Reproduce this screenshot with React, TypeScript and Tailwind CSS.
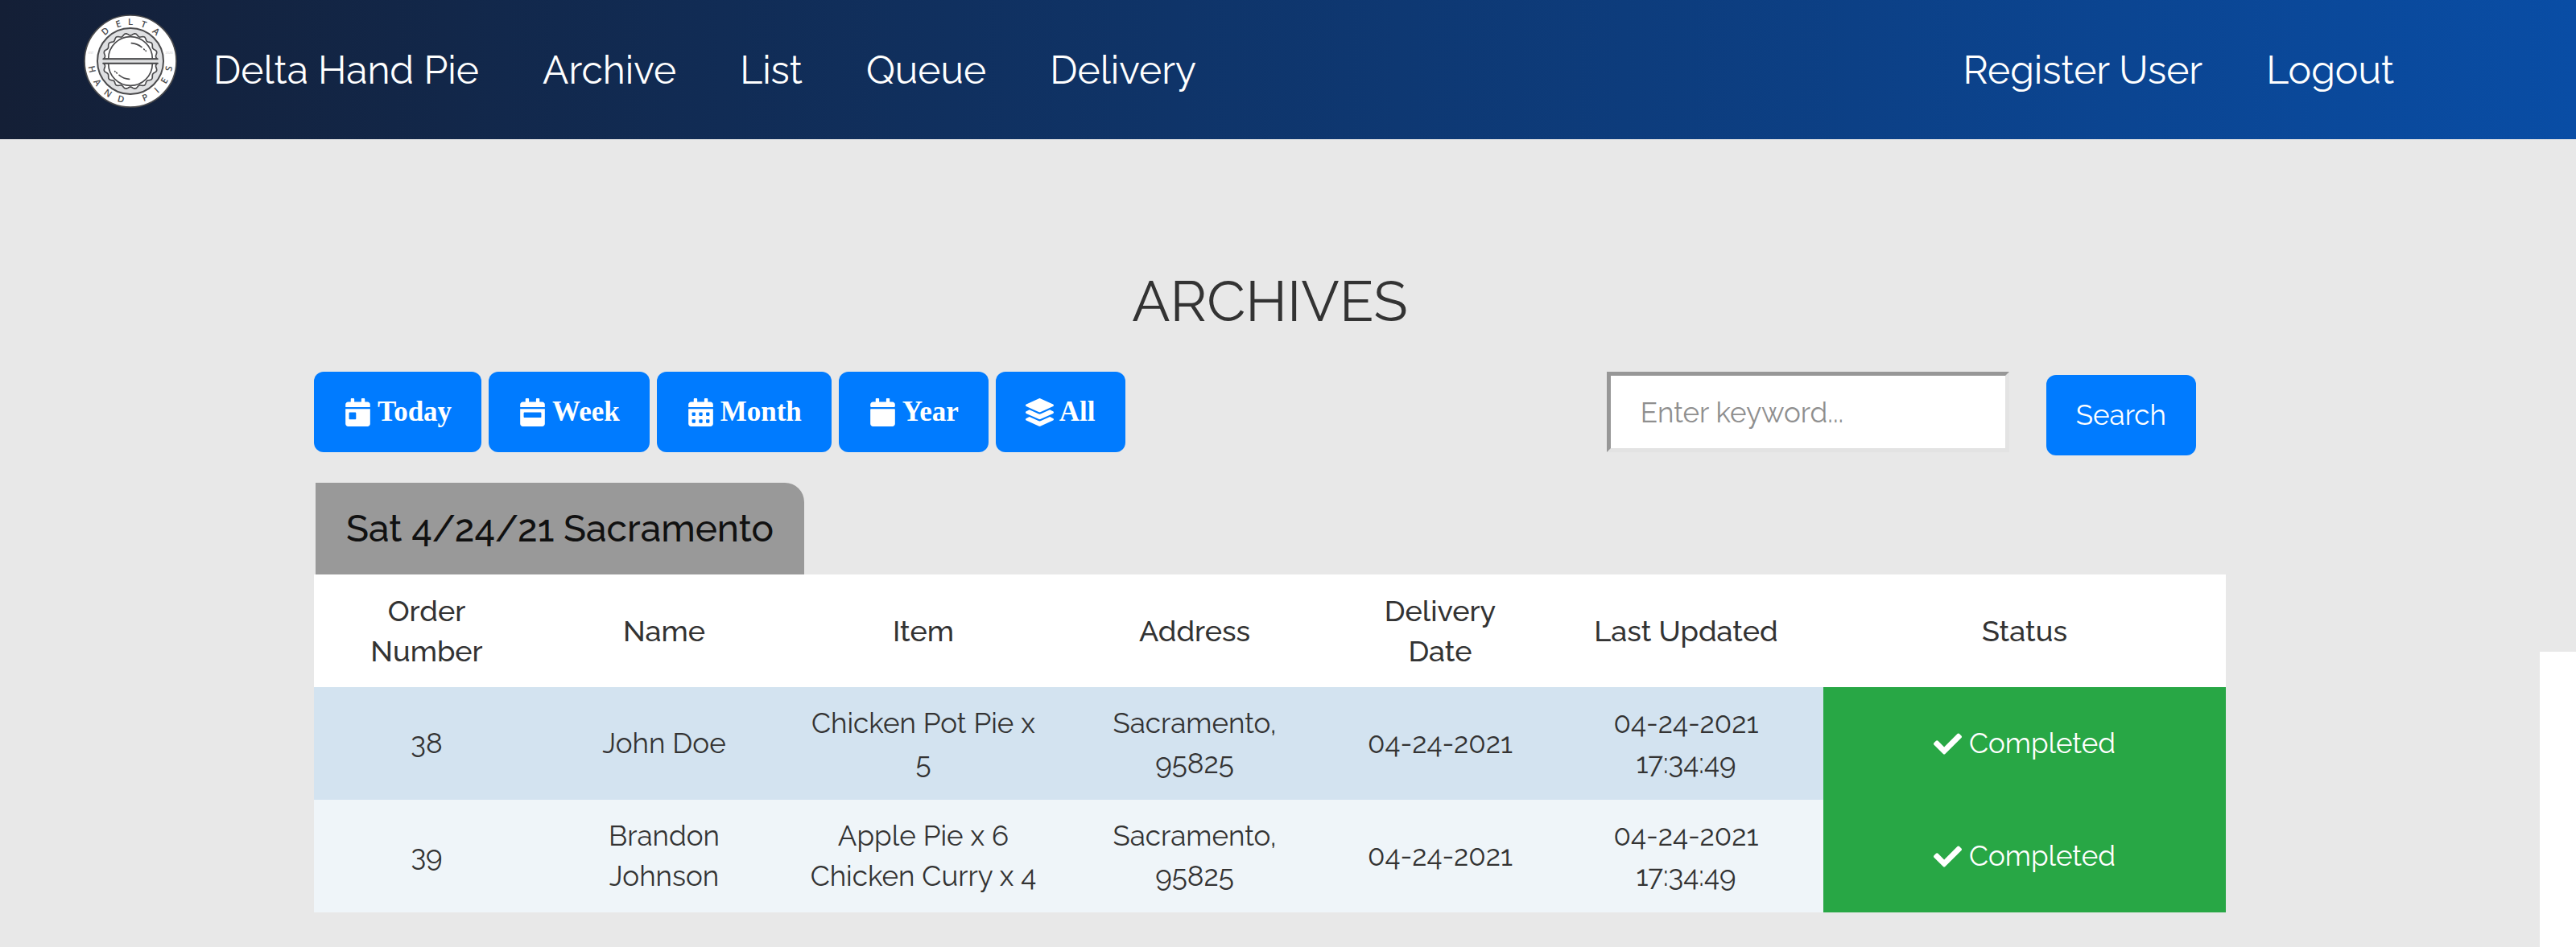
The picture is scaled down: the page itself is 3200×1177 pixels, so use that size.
import type { ReactNode } from 'react';
import { FaCalendar, FaCalendarAlt, FaCalendarDay, FaCalendarWeek, FaCheck, FaLayerGroup } from 'react-icons/fa';

const INK = '#4b4b4d';

/** Wavy crust edge of the upper half of the pie, closed along its cut side. */
function crustPath() {
  const points: string[] = [];
  for (let deg = 185; deg <= 355; deg += 2) {
    const a = (deg * Math.PI) / 180;
    const r = 100 - 4 * Math.cos((deg - 270) * (Math.PI / 180) * 18);
    points.push(`${(r * Math.cos(a)).toFixed(1)} ${(r * Math.sin(a)).toFixed(1)}`);
  }
  return `M${points.join('L')}Z`;
}

const topLetters: [string, number][] = [['D', -40], ['E', -18], ['L', 0], ['T', 20], ['A', 41]];
const bottomLetters: [string, number][] = [
  ['H', 78], ['A', 57], ['N', 35], ['D', 14], ['P', -22], ['I', -42], ['E', -60], ['S', -79],
];

function PieHalf() {
  return (
    <g fill="#fff" stroke={INK} strokeWidth="5" strokeLinejoin="round" strokeLinecap="round">
      <path d={crustPath()} />
      <path d="M-82 -9A82 82 0 0 1 82 -9" fill="none" />
      <path d="M4 -67A67 67 0 0 1 42 -52M50 -45L52 -43M57 -39L58 -38" fill="none" />
      <path d="M-102 -8H102" fill="none" />
    </g>
  );
}

function Logo() {
  return (
    <svg viewBox="-174 -174 348 348" className="size-[116px]" role="img" aria-label="Delta Hand Pies">
      <circle r="171" fill="#fff" stroke={INK} strokeWidth="5" />
      <circle r="123" fill="#dfe0e2" stroke={INK} strokeWidth="6" />
      <PieHalf />
      <g transform="rotate(180)">
        <PieHalf />
      </g>
      <g fill={INK} fontFamily="'Open Sans', sans-serif" fontWeight="600" fontSize="34" textAnchor="middle">
        {topLetters.map(([ch, deg]) => (
          <text key={`t${deg}`} transform={`rotate(${deg})`} y="-134">{ch}</text>
        ))}
        {bottomLetters.map(([ch, deg]) => (
          <text key={`b${deg}`} transform={`rotate(${deg})`} y="158">{ch}</text>
        ))}
      </g>
      <g fill="#c9c9cb" fontFamily="'Open Sans', sans-serif" fontSize="12" textAnchor="middle">
        <text x="-147" y="-26">EST</text>
        <text x="144" y="-26">2020</text>
      </g>
    </svg>
  );
}

function NavLink({ children }: { children: ReactNode }) {
  return <a href="#" className="whitespace-nowrap">{children}</a>;
}

const filters = [
  { label: 'Today', Icon: FaCalendarDay },
  { label: 'Week', Icon: FaCalendarWeek },
  { label: 'Month', Icon: FaCalendarAlt },
  { label: 'Year', Icon: FaCalendar },
  { label: 'All', Icon: FaLayerGroup },
];

const columns = [
  { title: 'Order\nNumber', width: 'w-[280px]' },
  { title: 'Name', width: 'w-[310px]' },
  { title: 'Item', width: 'w-[334px]' },
  { title: 'Address', width: 'w-[340px]' },
  { title: 'Delivery\nDate', width: 'w-[270px]' },
  { title: 'Last Updated', width: 'w-[341px]' },
  { title: 'Status', width: 'w-[500px]' },
];

const orders = [
  ['38', 'John Doe', 'Chicken Pot Pie x\n5', 'Sacramento,\n95825', '04-24-2021', '04-24-2021\n17:34:49'],
  ['39', 'Brandon\nJohnson', 'Apple Pie x 6\nChicken Curry x 4', 'Sacramento,\n95825', '04-24-2021', '04-24-2021\n17:34:49'],
];

export default function App() {
  return (
    <div className="flex min-h-screen flex-col bg-[#e8e8e8] font-['Raleway','Lato',sans-serif] text-[35px] leading-[50px] text-[#333]">
      <header className="flex items-center bg-linear-to-r/srgb from-[#141f36] to-[#094da5] py-[18px] pr-[226px] pl-[104px] text-5xl text-white">
        <a href="#" className="mr-[45px] mb-[21px] shrink-0">
          <Logo />
        </a>
        <nav className="flex flex-1 items-center gap-[79px]">
          <NavLink>Delta Hand Pie</NavLink>
          <NavLink>Archive</NavLink>
          <NavLink>List</NavLink>
          <NavLink>Queue</NavLink>
          <NavLink>Delivery</NavLink>
          <div className="ml-auto flex gap-[79px]">
            <NavLink>Register User</NavLink>
            <NavLink>Logout</NavLink>
          </div>
        </nav>
      </header>

      <div className="flex flex-1">
        <main className="flex-1 pt-[159px]">
          <div className="mx-auto w-full max-w-[2375px]">
            <h1 className="text-center text-[70px] leading-[84px]">ARCHIVES</h1>

            <div className="mt-[46px] flex items-start justify-between">
              <div className="flex gap-[9px]">
                {filters.map(({ label, Icon }) => (
                  <button
                    key={label}
                    type="button"
                    className="flex h-[100px] items-center gap-[7px] rounded-xl bg-[#007bff] px-[37px] font-['Liberation_Serif',serif] font-bold text-white"
                  >
                    <Icon aria-hidden="true" />
                    {label}
                  </button>
                ))}
              </div>
              <form className="mr-[37px] flex items-start gap-[46px]" onSubmit={(e) => e.preventDefault()}>
                <input
                  type="text"
                  aria-label="Keyword"
                  placeholder="Enter keyword..."
                  className="h-[100px] w-[500px] border-[5px] border-t-[#979797] border-r-[#e3e3e3] border-b-[#e3e3e3] border-l-[#979797] bg-white px-[37px] placeholder:text-[#8f8f8f]"
                />
                <button type="submit" className="mt-1 h-[100px] rounded-xl bg-[#007bff] px-[37px] text-white">
                  Search
                </button>
              </form>
            </div>

            <h2 className="mt-[34px] ml-[2px] w-fit rounded-tr-3xl bg-[#999] px-[38px] py-[30px] text-[46px] leading-[54px] font-medium text-[#111]">
              Sat 4/24/21 Sacramento
            </h2>

            <table className="w-full table-fixed border-collapse text-center whitespace-pre-line">
              <thead className="bg-white">
                <tr>
                  {columns.map(({ title, width }) => (
                    <th key={title} scope="col" className={`${width} py-5 text-4xl leading-[50px] font-medium`}>{title}</th>
                  ))}
                </tr>
              </thead>
              <tbody>
                {orders.map((cells) => (
                  <tr key={cells[0]} className="odd:bg-[#d3e3f0] even:bg-[#eff5f9]">
                    {cells.map((text, i) => (
                      <td key={i} className="py-5">{text}</td>
                    ))}
                    <td className="bg-[#28a745] py-5 text-white">
                      <span className="flex items-center justify-center gap-[9px]">
                        <FaCheck aria-hidden="true" />
                        Completed
                      </span>
                    </td>
                  </tr>
                ))}
              </tbody>
            </table>
          </div>
        </main>
        <aside className="mt-[637px] w-[45px] bg-white" />
      </div>
    </div>
  );
}
